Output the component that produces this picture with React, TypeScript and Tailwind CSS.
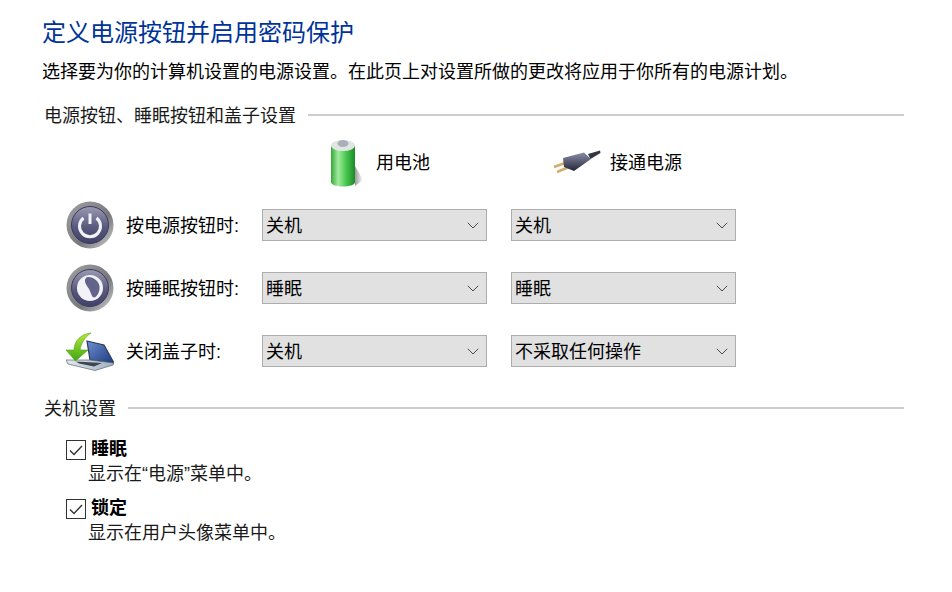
import React from "react";

const F = { fontFamily: '"Liberation Sans", "Noto Sans CJK SC", sans-serif' };

function Chevron() {
  return (
    <svg width="12" height="7" viewBox="0 0 12 7" fill="none" className="shrink-0">
      <path d="M0.8 0.8 L6 6 L11.2 0.8" stroke="#4a4a4a" strokeWidth="1" />
    </svg>
  );
}

function Select({ value }: { value: string }) {
  return (
    <div className="w-[225px] h-8 bg-[#e1e1e1] border border-[#adadad] flex items-center justify-between pl-[3px] pr-[7px] text-[18px] leading-none text-black">
      <span className="mt-0.5">{value}</span>
      <Chevron />
    </div>
  );
}

function RoundIcon({ id, children }: { id: string; children: React.ReactNode }) {
  return (
    <svg width="48" height="48" viewBox="0 0 48 48">
      <defs>
        <linearGradient id={id + "r"} x1="0" y1="0" x2="1" y2="1">
          <stop offset="0" stopColor="#a2a2a6" />
          <stop offset="0.6" stopColor="#77777c" />
          <stop offset="1" stopColor="#d2d2d4" />
        </linearGradient>
        <linearGradient id={id + "f"} x1="0" y1="0" x2="0" y2="1">
          <stop offset="0" stopColor="#9a9ab4" />
          <stop offset="0.55" stopColor="#5a5a80" />
          <stop offset="1" stopColor="#3f3f68" />
        </linearGradient>
      </defs>
      <circle cx="24" cy="24" r="23.5" fill={`url(#${id}r)`} />
      <circle cx="24" cy="24" r="18.5" fill={`url(#${id}f)`} stroke="#3c3c55" strokeWidth="1" />
      {children}
    </svg>
  );
}

function PowerIcon() {
  return (
    <RoundIcon id="pw">
      <path d="M17.5 17 A10.5 10.5 0 1 0 30.5 17" fill="none" stroke="#f1f1f6" strokeWidth="3" />
      <path d="M24 12.5 V23" stroke="#f1f1f6" strokeWidth="3" />
    </RoundIcon>
  );
}

function SleepIcon() {
  return (
    <RoundIcon id="sl">
      <circle cx="24" cy="24" r="13" fill="#f3f3f7" />
      <path d="M22 13 C29 13 34.5 19 33.5 25 C33 29 30.5 33.5 28 33.5 C26 33.5 25 29 23 25 C21 22 18.5 18.5 19 16 C19.5 14 20.5 13 22 13 Z" fill="#64648a" />
    </RoundIcon>
  );
}

function LidIcon() {
  return (
    <svg width="48" height="40" viewBox="0 0 48 40">
      <defs>
        <linearGradient id="scr" x1="0" y1="0" x2="1" y2="1">
          <stop offset="0" stopColor="#6d8fcf" />
          <stop offset="1" stopColor="#1c3a80" />
        </linearGradient>
        <linearGradient id="arr" x1="0" y1="0" x2="0" y2="1">
          <stop offset="0" stopColor="#b6ea3c" />
          <stop offset="1" stopColor="#3fa512" />
        </linearGradient>
        <linearGradient id="base" x1="0" y1="0" x2="1" y2="0">
          <stop offset="0" stopColor="#e4e9ee" />
          <stop offset="1" stopColor="#9eb0bf" />
        </linearGradient>
      </defs>
      <path d="M21 10 L38 14 L48 32 L24 29 Z" fill="url(#scr)" stroke="#2d3a55" strokeWidth="1.2" />
      <path d="M0 29 L24 29 L48 32 L47 34 L29 39.5 L2 33 Z" fill="url(#base)" stroke="#5b6470" strokeWidth="0.7" />
      <path d="M10 30.5 L36 32 L28 35.5 L13 32.5 Z" fill="#3e4650" />
      <path d="M25 2 C15 3 8 10 8 19 L0 19 L9.5 30 L22 19 L14 19 C15 12 19 6 25 2 Z" fill="url(#arr)" stroke="#4f9a18" strokeWidth="0.6" />
    </svg>
  );
}

function BatteryIcon() {
  return (
    <svg width="34" height="50" viewBox="0 0 34 50">
      <defs>
        <linearGradient id="bat" x1="0" y1="0" x2="1" y2="0">
          <stop offset="0" stopColor="#35a838" />
          <stop offset="0.3" stopColor="#a3eb9e" />
          <stop offset="0.62" stopColor="#49c850" />
          <stop offset="1" stopColor="#1c8a28" />
        </linearGradient>
        <linearGradient id="sh" x1="0" y1="0" x2="1" y2="0">
          <stop offset="0" stopColor="#9a9a9a" />
          <stop offset="1" stopColor="#ffffff" />
        </linearGradient>
      </defs>
      <path d="M25 28 L33 42 L25 48 Z" fill="url(#sh)" />
      <path d="M1 8 V44 C1 50 25 50 25 44 V8 Z" fill="url(#bat)" />
      <ellipse cx="13" cy="7.5" rx="12" ry="5.5" fill="#dfe6e2" />
      <ellipse cx="13" cy="5.5" rx="5.5" ry="3.5" fill="#a9b0b9" />
    </svg>
  );
}

function PlugIcon() {
  return (
    <svg width="48" height="28" viewBox="0 0 48 28">
      <defs>
        <linearGradient id="plug" x1="0" y1="0" x2="0" y2="1">
          <stop offset="0" stopColor="#8a8da6" />
          <stop offset="1" stopColor="#25283a" />
        </linearGradient>
      </defs>
      <path d="M1 18 L12 14 M4 23 L16 18" stroke="#d3ad6e" strokeWidth="2.6" />
      <path d="M10 9 L31 3.5 L38 10 L21 22 L11 18 Z" fill="url(#plug)" />
      <path d="M35 5 L47 1.5 L47.5 4 L37.5 10 Z" fill="#34363f" />
    </svg>
  );
}

function Check() {
  return (
    <div className="w-5 h-5 mt-0.5 border border-[#333] flex items-center justify-center shrink-0 bg-white">
      <svg width="14" height="11" viewBox="0 0 14 11" fill="none">
        <path d="M1 5.5 L5 9.5 L13 1" stroke="#333" strokeWidth="1.4" />
      </svg>
    </div>
  );
}

function Section({ title }: { title: string }) {
  return (
    <div className="flex items-center gap-3 h-6 text-[18px] leading-6 text-[#1a1a1a] pl-[2px]">
      <span className="shrink-0 mt-0.5">{title}</span>
      <div className="flex-1 h-0.5 bg-[#cdcdcd]" />
    </div>
  );
}

function Row({ icon, label, a, b, mt }: { icon: React.ReactNode; label: string; a: string; b: string; mt: string }) {
  return (
    <div className={`flex items-center h-8 ${mt}`}>
      <div className="w-[48px] ml-6 flex items-center justify-center shrink-0">{icon}</div>
      <div className="w-[136px] ml-3 text-[18px] leading-none text-black mt-0.5">{label}</div>
      <Select value={a} />
      <div className="ml-6">
        <Select value={b} />
      </div>
    </div>
  );
}

function Option({ title, desc }: { title: string; desc: string }) {
  return (
    <div className="pl-6">
      <div className="flex items-center gap-[5px] h-6">
        <Check />
        <span className="font-bold text-[18px] leading-6 text-black">{title}</span>
      </div>
      <div className="pl-[22px] mt-px text-[18px] leading-6 text-[#1a1a1a]">{desc}</div>
    </div>
  );
}

export default function App() {
  return (
    <div className="w-[952px] h-[592px] bg-white pl-[42px] pr-[48px] pt-[15px] overflow-hidden" style={F}>
      <h1 className="text-[24px] leading-9 font-normal text-[#003399]">定义电源按钮并启用密码保护</h1>
      <p className="text-[18px] leading-6 text-black mt-[9px]">
        选择要为你的计算机设置的电源设置。在此页上对设置所做的更改将应用于你所有的电源计划。
      </p>
      <div className="mt-[19px]">
        <Section title="电源按钮、睡眠按钮和盖子设置" />
      </div>
      <div className="flex items-center h-12 mt-[12px] text-[18px] leading-none text-black">
        <div className="ml-[288px] shrink-0">
          <BatteryIcon />
        </div>
        <span className="ml-[12px]">用电池</span>
        <div className="ml-[123px] shrink-0">
          <PlugIcon />
        </div>
        <span className="ml-[9px]">接通电源</span>
      </div>
      <Row icon={<PowerIcon />} label="按电源按钮时:" a="关机" b="关机" mt="mt-[22px]" />
      <Row icon={<SleepIcon />} label="按睡眠按钮时:" a="睡眠" b="睡眠" mt="mt-[31px]" />
      <Row icon={<LidIcon />} label="关闭盖子时:" a="关机" b="不采取任何操作" mt="mt-[31px]" />
      <div className="mt-[29px]">
        <Section title="关机设置" />
      </div>
      <div className="mt-[17px]">
        <Option title="睡眠" desc="显示在“电源”菜单中。" />
      </div>
      <div className="mt-[10px]">
        <Option title="锁定" desc="显示在用户头像菜单中。" />
      </div>
    </div>
  );
}
